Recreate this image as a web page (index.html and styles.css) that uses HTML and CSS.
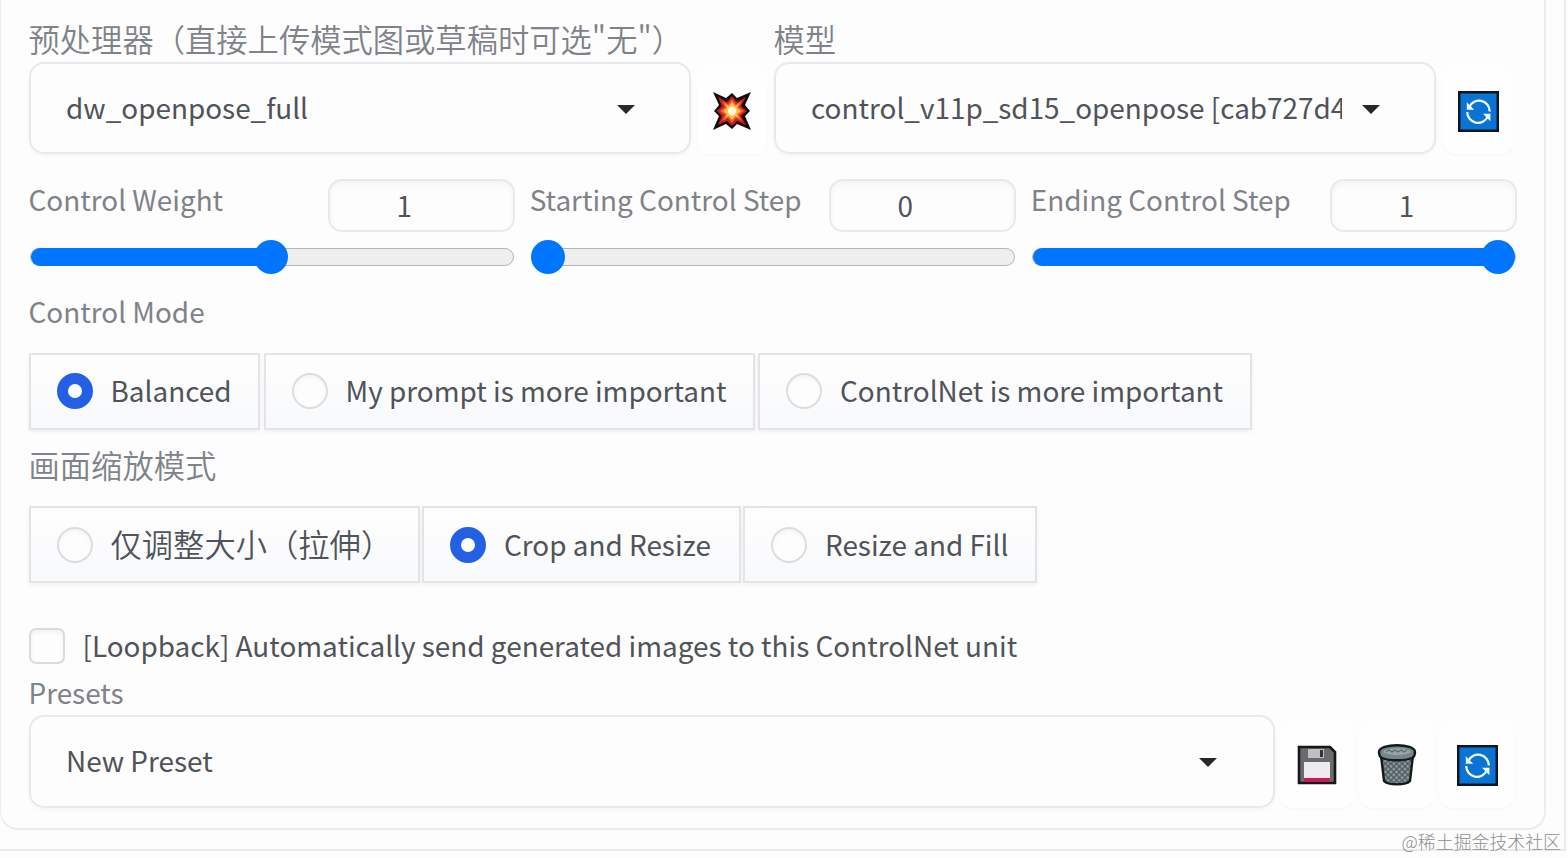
FILE: index.html
```html
<!DOCTYPE html>
<html lang="zh-CN">
<head>
  <meta charset="UTF-8">
  <title>ControlNet</title>
  <meta name="viewport" content="width=device-width, initial-scale=1">
  <link rel="stylesheet" href="styles.css">
</head>
<body>
  <!-- shared icons -->
  <svg class="defs" width="0" height="0">
    <symbol id="refresh" viewBox="0 0 40 40">
      <rect x="1.2" y="1.2" width="37.6" height="37.6" fill="#0a74d4" stroke="#0b1520" stroke-width="2.4"/>
      <path d="M11 15.500a10.500 10.500 0 0 1 20 4.500M29 25a10.500 10.500 0 0 1-20-4.500" fill="none" stroke="#f2faff" stroke-width="2.2"/>
      <path d="M8.600 11v7.200h7.200zM31.600 29.400v-7.200h-7.200z" fill="#f2faff"/>
    </symbol>
  </svg>

  <div class="outer">
    <div class="panel">
      <div class="row models">
        <div class="field">
          <label class="label cn">预处理器（直接上传模式图或草稿时可选"无"）</label>
          <div class="select"><span class="value">dw_openpose_full</span><i class="caret"></i></div>
        </div>
        <button class="tool">
          <svg width="40" height="40" viewBox="0 0 40 40">
            <path d="M1 1l13 6 6-5 5 5L39 1l-6 13 5 6-5 5 6 14-14-6-5 5-6-5L1 39l6-14-5-5 5-6z" fill="#120b0b"/>
            <path d="M6 6l9 5 5-6 5 6 9-5-5 9 6 5-6 5 5 9-9-4-5 5-5-5-9 4 4-9-5-5 5-5z" fill="#c81c26"/>
            <path d="M10 10l6 3 4-5 4 5 6-3-3 6 5 4-5 4 3 6-6-3-4 5-4-5-6 3 3-6-5-4 5-4z" fill="#f0642c"/>
            <path d="M13 13l4 2 3-4 3 4 4-2-2 4 4 3-4 3 2 4-4-2-3 4-3-4-4 2 2-4-4-3 4-3z" fill="#fdc04c"/>
            <circle cx="20" cy="20" r="4.2" fill="#fff8dc"/>
          </svg>
        </button>
        <div class="field">
          <label class="label cn">模型</label>
          <div class="select"><span class="value">control_v11p_sd15_openpose [cab727d4]</span><i class="caret"></i></div>
        </div>
        <button class="tool"><svg width="41" height="41"><use href="#refresh"/></svg></button>
      </div>

      <div class="row sliders">
        <div class="slider">
          <div class="head"><label class="label">Control Weight</label><span class="number">1</span></div>
          <div class="track"><span class="fill" style="width:50%"></span><span class="thumb"></span></div>
        </div>
        <div class="slider">
          <div class="head"><label class="label">Starting Control Step</label><span class="number">0</span></div>
          <div class="track"><span class="fill" style="width:0%"></span><span class="thumb"></span></div>
        </div>
        <div class="slider">
          <div class="head"><label class="label">Ending Control Step</label><span class="number">1</span></div>
          <div class="track"><span class="fill" style="width:100%"></span><span class="thumb"></span></div>
        </div>
      </div>

      <label class="label mode-label">Control Mode</label>
      <div class="radios mode">
        <div class="option"><i class="radio checked"></i><span>Balanced</span></div>
        <div class="option"><i class="radio"></i><span>My prompt is more important</span></div>
        <div class="option"><i class="radio"></i><span>ControlNet is more important</span></div>
      </div>

      <label class="label cn resize-label">画面缩放模式</label>
      <div class="radios resize">
        <div class="option"><i class="radio"></i><span class="cn">仅调整大小（拉伸）</span></div>
        <div class="option"><i class="radio checked"></i><span>Crop and Resize</span></div>
        <div class="option"><i class="radio"></i><span>Resize and Fill</span></div>
      </div>

      <div class="loopback"><i class="checkbox"></i><span>[Loopback] Automatically send generated images to this ControlNet unit</span></div>

      <div class="row presets">
        <div class="field">
          <label class="label">Presets</label>
          <div class="select"><span class="value">New Preset</span><i class="caret"></i></div>
        </div>
        <button class="tool">
          <svg width="40" height="40" viewBox="0 0 40 40">
            <path d="M2 2h31l5 5v31H2z" fill="#6b6b6d" stroke="#17171a" stroke-width="2.6"/>
            <path d="M11 4h16v9H11z" fill="#bfc0c2"/>
            <path d="M23 5h3v7h-3z" fill="#333"/>
            <path d="M7 17h26v17H7z" fill="#ececee"/>
            <path d="M7 33h26v3.500H7z" fill="#d8135c"/>
          </svg>
        </button>
        <button class="tool">
          <svg width="40" height="42" viewBox="0 0 40 42">
            <defs>
              <pattern id="mesh" width="5.600" height="5.600" patternUnits="userSpaceOnUse">
                <path d="M0 0l5.600 5.600M5.600 0L0 5.600" stroke="#4a555a" stroke-width="1.200"/>
              </pattern>
            </defs>
            <path d="M4 11l3 26c4 4.500 22 4.500 26 0l3-26z" fill="#8f9b9f"/>
            <path d="M4 11l3 26c4 4.500 22 4.500 26 0l3-26z" fill="url(#mesh)" stroke="#14191b" stroke-width="2.400"/>
            <path d="M2 8c0-9 36-9 36 0 0 3-1 5-3 6-8 3-22 3-30 0-2-1-3-3-3-6z" fill="#76868b" stroke="#14191b" stroke-width="2.400"/>
            <path d="M6 8c4-5 24-5 28 0-5 4-23 4-28 0z" fill="#97a5a9"/>
            <path d="M9 8l3-2 3 2 3-2 3 2 3-2 3 2 3-2" fill="none" stroke="#5c6a6f" stroke-width="1.200"/>
          </svg>
        </button>
        <button class="tool"><svg width="41" height="41"><use href="#refresh"/></svg></button>
      </div>
    </div>
  </div>
  <div class="watermark">@稀土掘金技术社区</div>
</body>
</html>
```
FILE: styles.css
```css
:root {
  --bg: #fdfdfd;
  --border: #e9e9eb;
  --label: #7f8289;
  --text: #505359;
  --blue: #0075ff;
  --radio: #2460e4;
}

* {
  box-sizing: border-box;
}

body {
  margin: 0;
  height: 858px;
  overflow: hidden;
  position: relative;
  background: var(--bg);
  color: var(--text);
  font-family: "Noto Sans CJK SC", sans-serif;
  font-size: 27.9px;
  font-weight: 400;
}

.defs {
  position: absolute;
}

.outer {
  width: 1566px;
  height: 851px;
  border-right: 2px solid #ececec;
  border-bottom: 2px solid #e9e9e9;
}

.panel {
  width: 1546px;
  height: 830px;
  padding: 18px 27px 0 27.500px;
  border: 2px solid #ececee;
  border-top: 0;
  border-left-width: 1px;
  border-radius: 0 0 18px 18px;
}

.row {
  display: flex;
}

.label {
  display: block;
  height: 44px;
  color: var(--label);
  line-height: 41px;
  white-space: nowrap;
}

.cn {
  font-size: 31.3px;
  font-weight: 350;
}

.label.cn {
  line-height: 41px;
}

.models,
.presets {
  align-items: flex-end;
}

.models {
  gap: 6.500px;
}

.models .field {
  width: 662px;
}

.presets .field {
  width: 1246.500px;
}

.select {
  height: 92px;
  display: flex;
  align-items: center;
  padding: 0 54px 0 35.500px;
  border: 2px solid var(--border);
  border-radius: 15px;
  box-shadow: 0 2px 4px rgba(0, 0, 0, 0.03);
}

.value {
  flex: 1;
  overflow: hidden;
  white-space: nowrap;
  line-height: 42px;
  padding-bottom: 2px;
}

.caret {
  margin: 2px 0 0 20px;
  border: 9px solid transparent;
  border-top: 9px solid #26282c;
  border-bottom: 0;
}

.tool {
  width: 70px;
  height: 86px;
  padding: 0;
  display: flex;
  align-items: center;
  justify-content: center;
  border: 0;
  border-radius: 14px;
  background: #fefefe;
  box-shadow: 0 2px 3px rgba(0, 0, 0, 0.025);
}

.models .tool:last-child {
  width: 72px;
}

.tool svg {
  display: block;
}

.sliders {
  gap: 15px;
  margin-top: 25px;
}

.slider {
  width: 486.500px;
}

.head {
  display: flex;
  justify-content: space-between;
}

.number {
  width: 187px;
  height: 53px;
  padding-right: 34px;
  border: 2px solid var(--border);
  border-radius: 14px;
  line-height: 49px;
  text-align: center;
  box-shadow: inset 0 3px 6px rgba(0, 0, 0, 0.04);
}

.track {
  height: 18px;
  margin: 16px 1px 0;
  padding-right: 33px;
  display: flex;
  align-items: center;
  border: 1px solid #b5b5b5;
  border-radius: 9px;
  background: #eeeeee;
}

/* the extra padding runs the fill under the middle of the thumb */
.fill {
  height: 18px;
  flex-shrink: 0;
  box-sizing: content-box;
  padding-right: 16px;
  border-radius: 9px 0 0 9px;
  background: var(--blue);
}

.thumb {
  width: 34px;
  height: 34px;
  flex-shrink: 0;
  margin: 0 -17px;
  border-radius: 50%;
  background: var(--blue);
}

.mode-label {
  margin-top: 25px;
}

.radios {
  display: grid;
  height: 77px;
}

.mode {
  grid-template-columns: 231.500px 491px 494px;
  column-gap: 3.500px;
  margin-top: 18px;
}

.resize {
  grid-template-columns: 391.500px 319px 294px;
  column-gap: 2px;
  margin-top: 18px;
}

.resize-label {
  margin-top: 14px;
}

.option {
  display: flex;
  align-items: center;
  gap: 18px;
  padding: 0 0 2px 26px;
  border: 2px solid #e3e4e7;
  background: linear-gradient(#fefefe, #f8f9fb);
  box-shadow: 0 2px 4px rgba(0, 0, 0, 0.05);
  line-height: 42px;
  white-space: nowrap;
}

.resize .option {
  padding-bottom: 0;
}

.option span {
  padding-bottom: 2px;
}

.radio {
  width: 36px;
  height: 36px;
  border: 2px solid #dcdddf;
  border-radius: 50%;
  background: #fdfdfd;
  box-shadow: inset 0 2px 4px rgba(0, 0, 0, 0.04);
}

.radio.checked {
  border: 11px solid var(--radio);
  background: #fff;
  box-shadow: none;
}

.loopback {
  display: flex;
  align-items: center;
  gap: 18px;
  height: 44px;
  margin-top: 41px;
  line-height: 42px;
  white-space: nowrap;
}

.loopback span {
  padding-bottom: 2px;
}

.checkbox {
  width: 36px;
  height: 36px;
  border: 2px solid #dadbdd;
  border-radius: 7px;
  box-shadow: inset 0 2px 4px rgba(0, 0, 0, 0.05);
}

.presets {
  gap: 4px;
  margin-top: 3px;
}

.presets .label {
  line-height: 43px;
}

.presets .select {
  height: 93px;
  padding-right: 56px;
}

.presets .value {
  padding-bottom: 3px;
}

.presets .tool {
  width: 76px;
}

.watermark {
  position: absolute;
  right: 7px;
  bottom: 5px;
  color: #8e8e90;
  font-size: 17.900px;
  font-weight: 300;
  line-height: 24px;
}
```
